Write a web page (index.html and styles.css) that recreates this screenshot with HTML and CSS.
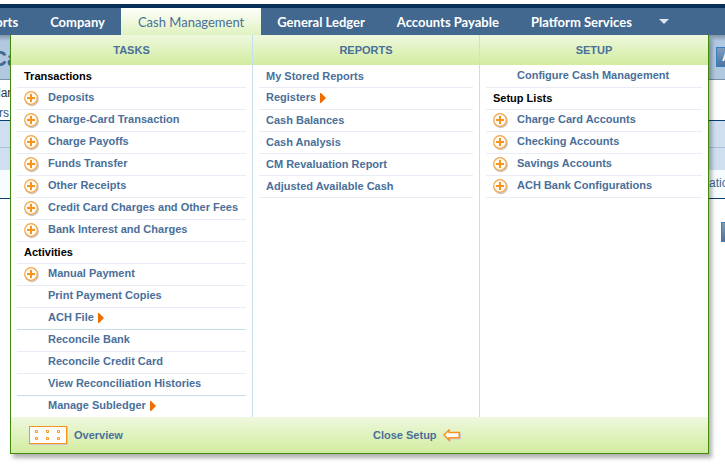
FILE: index.html
```html
<!DOCTYPE html>
<html lang="en">
<head>
<meta charset="utf-8">
<title>Cash Management</title>
<link rel="stylesheet" href="styles.css">
</head>
<body>
<svg class="defs" aria-hidden="true">
  <symbol id="plus" viewBox="0 0 16 16">
    <circle cx="7.8" cy="8" r="6.4" fill="none" stroke="#c9c4c4" stroke-width="1.5"/>
    <circle cx="7" cy="7" r="6.3" fill="#fffaf2" stroke="#f3a64c" stroke-width="1.2"/>
    <path d="M7 3v8M3 7h8" stroke="#f7941e" stroke-width="2"/>
  </symbol>
  <symbol id="caret" viewBox="0 0 6 10"><path d="M0 0h1l5 5-5 5H0z" fill="#ee6c00"/></symbol>
</svg>
<nav class="nav">
  <a href="#">Reports</a>
  <a href="#">Company</a>
  <a href="#" class="active">Cash Management</a>
  <a href="#">General Ledger</a>
  <a href="#">Accounts Payable</a>
  <a href="#">Platform Services</a>
  <button class="more" aria-label="More"><svg width="10" height="5" viewBox="0 0 10 5"><path d="M0 0h10L5 5z" fill="#dbe6f0"/></svg></button>
</nav>
<div class="stage">
  <main class="page">
    <header class="titlebar"><h1>Ca</h1><button class="btn">Add</button></header>
    <div class="filters"><span class="label">lar</span><a href="#">rs</a></div>
    <div class="band"></div>
    <div class="band low"></div>
    <div class="tablehead">ations</div>
    <div class="actions"><button class="btn" aria-label="Done"></button></div>
  </main>
  <section class="menu">
    <div class="columns">
      <div class="col">
        <h2>Tasks</h2>
        <ul>
          <li class="group">Transactions</li>
          <li><button aria-label="Add"><svg><use href="#plus"/></svg></button><a href="#">Deposits</a></li>
          <li><button aria-label="Add"><svg><use href="#plus"/></svg></button><a href="#">Charge-Card Transaction</a></li>
          <li><button aria-label="Add"><svg><use href="#plus"/></svg></button><a href="#">Charge Payoffs</a></li>
          <li><button aria-label="Add"><svg><use href="#plus"/></svg></button><a href="#">Funds Transfer</a></li>
          <li><button aria-label="Add"><svg><use href="#plus"/></svg></button><a href="#">Other Receipts</a></li>
          <li><button aria-label="Add"><svg><use href="#plus"/></svg></button><a href="#">Credit Card Charges and Other Fees</a></li>
          <li><button aria-label="Add"><svg><use href="#plus"/></svg></button><a href="#">Bank Interest and Charges</a></li>
          <li class="group">Activities</li>
          <li><button aria-label="Add"><svg><use href="#plus"/></svg></button><a href="#">Manual Payment</a></li>
          <li class="indent"><a href="#">Print Payment Copies</a></li>
          <li class="indent strong"><a href="#">ACH File</a><svg class="caret"><use href="#caret"/></svg></li>
          <li class="indent"><a href="#">Reconcile Bank</a></li>
          <li class="indent"><a href="#">Reconcile Credit Card</a></li>
          <li class="indent strong"><a href="#">View Reconciliation Histories</a></li>
          <li class="indent"><a href="#">Manage Subledger</a><svg class="caret"><use href="#caret"/></svg></li>
        </ul>
      </div>
      <div class="col">
        <h2>Reports</h2>
        <ul>
          <li class="plain"><a href="#">My Stored Reports</a></li>
          <li><a href="#">Registers</a><svg class="caret"><use href="#caret"/></svg></li>
          <li class="plain"><a href="#">Cash Balances</a></li>
          <li class="plain"><a href="#">Cash Analysis</a></li>
          <li class="plain"><a href="#">CM Revaluation Report</a></li>
          <li class="plain"><a href="#">Adjusted Available Cash</a></li>
        </ul>
      </div>
      <div class="col">
        <h2>Setup</h2>
        <ul>
          <li class="indent"><a href="#">Configure Cash Management</a></li>
          <li class="group">Setup Lists</li>
          <li><button aria-label="Add"><svg><use href="#plus"/></svg></button><a href="#">Charge Card Accounts</a></li>
          <li><button aria-label="Add"><svg><use href="#plus"/></svg></button><a href="#">Checking Accounts</a></li>
          <li><button aria-label="Add"><svg><use href="#plus"/></svg></button><a href="#">Savings Accounts</a></li>
          <li><button aria-label="Add"><svg><use href="#plus"/></svg></button><a href="#">ACH Bank Configurations</a></li>
        </ul>
      </div>
    </div>
    <footer class="foot">
      <a href="#" class="overview">
        <svg width="39" height="19" viewBox="0 0 39 19">
          <path d="M1 18.5h37.5V1" fill="none" stroke="#cfc6cf"/>
          <rect x=".5" y=".5" width="37" height="17" fill="#fdfdfd" stroke="#f7941e"/>
          <path d="M6.500 4.500h2v2h-2zM17.500 4.500h2v2h-2zM28.500 4.500h2v2h-2zM6.500 11.500h2v2h-2zM17.500 11.500h2v2h-2zM28.500 11.500h2v2h-2z" fill="#fff" stroke="#f7941e"/>
        </svg>
        Overview
      </a>
      <button class="close">Close Setup
        <svg width="18" height="13" viewBox="0 0 18 13">
          <path d="M2 7.500L7 13V10h10.500V4" fill="none" stroke="#cfc3d6"/>
          <path d="M1 6L6 1v2.500h10.300v5.200H6V11z" fill="#fff" stroke="#f7941e" stroke-width="1.500"/>
        </svg>
      </button>
    </footer>
  </section>
</div>
</body>
</html>
```
FILE: styles.css
```css
* { box-sizing: border-box; }
body {
  margin: 0;
  padding-top: 4px;
  min-height: 100vh;
  background: #fff;
  color: #000;
  font: 11px/18px "Liberation Sans", Arial, sans-serif;
}
a { color: #4a6f9a; text-decoration: none; }
button { padding: 0; border: 0; background: none; font: inherit; color: inherit; }
svg { display: block; }
.defs { position: absolute; width: 0; height: 0; }

.nav {
  display: flex;
  height: 31px;
  border-top: 4px solid #08305a;
  background: #42688f;
  overflow: hidden;
}
.nav a {
  flex: none;
  padding: 0 16px;
  color: #fff;
  font: bold 13px/28px Lato, sans-serif;
}
.nav a:first-child { margin-left: -43px; }
.nav a.active {
  padding: 0 17px;
  background: linear-gradient(#fdfffa, #e0f2c0);
  color: #4a6f9a;
  font-weight: normal;
}
.more { padding: 0 11px; }

.stage { display: grid; grid-template-columns: minmax(0, 1fr); }
.page, .menu { grid-area: 1 / 1; }
.page { overflow: hidden; }
.titlebar {
  display: flex;
  align-items: center;
  justify-content: space-between;
  height: 45px;
  border-bottom: 1px solid #7990a8;
  background: linear-gradient(#8295a8, #b0c8e0 6px);
}
.titlebar h1 { margin: 4px 0 0 -9px; color: #42688f; font-size: 22px; }
.btn {
  flex: none;
  width: 40px;
  height: 20px;
  margin-right: -31px;
  padding-left: 5px;
  border: 1px solid #3a7cc0;
  background: linear-gradient(#7e9dbc, #4c749f);
  color: #fff;
  font-weight: bold;
  font-size: 12px;
  line-height: 18px;
  text-align: left;
}
.filters {
  display: flex;
  flex-direction: column;
  height: 41px;
  padding-top: 3px;
  border-bottom: 1px solid #0a3d73;
  font-size: 12px;
  line-height: 20px;
}
.filters a { margin-left: -1px; color: #2f557f; }
.label { margin-left: -2px; color: #333; }
.band { height: 27px; border-bottom: 1px solid #a9c1db; background: #cfdff0; }
.band.low { height: 22px; border: 0; }
.tablehead {
  height: 29px;
  margin-right: -18px;
  padding-right: 2px;
  border-bottom: 1px solid #0a3d73;
  background: #f7fcff;
  color: #42688f;
  font-size: 12px;
  line-height: 26px;
  text-align: right;
}
.actions { display: flex; justify-content: flex-end; padding-top: 23px; }
.actions .btn { margin-right: -36px; }

.menu {
  z-index: 1;
  margin: 0 16px 18px 10px;
  border: 1px solid #3f8a0c;
  border-top: 0;
  background: #fff;
  box-shadow: 3px 4px 4px rgba(0, 0, 0, 0.3);
}
.columns { display: grid; grid-template-columns: 241fr 227fr 229fr; }
.col + .col { border-left: 1px solid #c5dfee; }
.col h2 {
  margin: 0;
  background: linear-gradient(#eef8de, #d2ec9f);
  color: #4a6f9a;
  font-size: 11px;
  line-height: 30px;
  text-align: center;
  text-transform: uppercase;
}
.col ul { margin: 0; padding: 1px 6px 0; list-style: none; }
.col li {
  display: flex;
  align-items: flex-start;
  height: 22px;
  padding-left: 7px;
  border-bottom: 1px solid #ebebf7;
  font-weight: bold;
}
.col li.group, .col li.plain { line-height: 20px; }
.col li.indent { padding-left: 31px; }
.col li.strong { border-color: #c5dfe6; }
.col:first-child li:last-child { height: 21px; border: 0; }
.col li button { width: 24px; padding-top: 3px; }
.col li button svg { width: 16px; height: 16px; }
.col svg.caret { width: 6px; height: 10px; margin: 5px 0 0 4px; }

.foot {
  display: grid;
  grid-template-columns: 362fr 335fr;
  height: 36px;
  background: linear-gradient(#eef8de, #d2ec9f);
  color: #4a6f9a;
  font-weight: bold;
}
.foot a, .foot button { display: flex; align-items: center; gap: 6px; }
.overview { padding-left: 18px; }
```
